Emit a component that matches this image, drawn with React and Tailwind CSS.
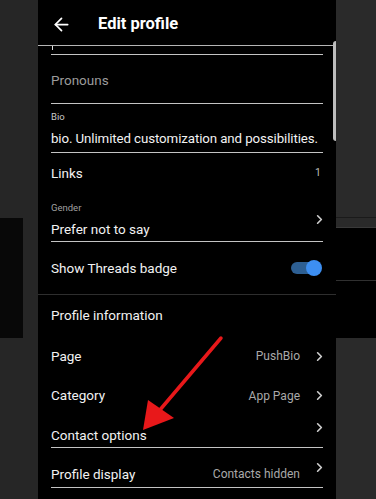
import { ArrowLeft, ChevronRight } from "lucide-react";

const font = { fontFamily: "Roboto, 'Noto Sans', sans-serif" };

function Chevron({ className = "" }) {
  return (
    <ChevronRight size={15} strokeWidth={2.6} className={"text-[#cfcfcf] " + className} />
  );
}

function NavRow({ label, value, h }) {
  return (
    <div className={"flex items-center justify-between px-[13px] " + h}>
      <span className="text-[13.5px] text-[#f2f2f2]">{label}</span>
      <div className="flex items-center gap-[12px]">
        {value && <span className="text-[12px] text-[#a9a9a9]">{value}</span>}
        <Chevron className="-mr-[4px]" />
      </div>
    </div>
  );
}

// rows whose chevron sits higher than the text, with an underline
function LinedRow({ label, value, h, pb, chevTop }) {
  return (
    <div className={"px-[13px] " + h}>
      <div className="h-full border-b border-[#c4c4c4] flex justify-between">
        <span className={"self-end text-[13.5px] leading-[16px] text-[#f2f2f2] " + pb}>{label}</span>
        <div className="flex items-start gap-[12px]">
          {value && (
            <span className={"self-end text-[12px] leading-[16px] text-[#a9a9a9] " + pb}>{value}</span>
          )}
          <Chevron className={"-mr-[4px] " + chevTop} />
        </div>
      </div>
    </div>
  );
}

export default function App() {
  return (
    <div className="w-[376px] h-[499px] flex bg-black overflow-hidden" style={font}>
      {/* left background */}
      <div className="w-[38px] shrink-0 flex flex-col bg-[#262626]">
        <div className="h-[218px]" />
        <div className="h-[120px] w-[23px] bg-[#080808]" />
      </div>

      {/* phone */}
      <div className="relative w-[298px] shrink-0 bg-black flex flex-col">
        {/* header */}
        <div className="h-[46px] shrink-0 flex items-center gap-[26px] px-[13px] pt-[3px] border-b border-[#b5b5b5]">
          <ArrowLeft size={21} strokeWidth={2} className="text-white" />
          <span className="text-[16.5px] font-bold text-white">Edit profile</span>
        </div>

        {/* partially hidden field */}
        <div className="h-[9px] shrink-0 px-[13px]">
          <div className="h-full border-b border-[#c4c4c4] relative">
            <div className="absolute left-[1px] top-0 w-[1px] h-[4px] bg-[#ddd]" />
          </div>
        </div>

        {/* pronouns */}
        <div className="h-[49px] shrink-0 px-[13px]">
          <div className="h-full border-b border-[#c4c4c4] flex items-center pt-[3px]">
            <span className="text-[13.5px] text-[#9b9b9b]">Pronouns</span>
          </div>
        </div>

        {/* bio */}
        <div className="h-[49px] shrink-0 px-[13px]">
          <div className="h-full border-b border-[#c4c4c4] flex flex-col pt-[8px]">
            <span className="text-[9.5px] leading-[10px] text-[#c8c8c8]">Bio</span>
            <span className="text-[13.3px] leading-[18px] mt-[8px] tracking-[-0.1px] text-[#f2f2f2] whitespace-nowrap">
              bio. Unlimited customization and possibilities.
            </span>
          </div>
        </div>

        {/* links */}
        <div className="h-[40px] shrink-0 px-[13px] flex items-center justify-between">
          <span className="text-[13.5px] text-[#f2f2f2]">Links</span>
          <span className="text-[10.5px] text-[#bbb] mr-[2px]">1</span>
        </div>

        {/* gender */}
        <div className="h-[49px] shrink-0 px-[13px]">
          <div className="h-full border-b border-[#c4c4c4] flex items-start justify-between pt-[10px]">
            <div className="flex flex-col">
              <span className="text-[9.5px] leading-[10px] text-[#a0a0a0]">Gender</span>
              <span className="text-[13.5px] leading-[18px] mt-[7px] text-[#f2f2f2]">Prefer not to say</span>
            </div>
            <Chevron className="mt-[9px] -mr-[4px]" />
          </div>
        </div>

        {/* threads badge */}
        <div className="h-[53px] shrink-0 px-[13px] flex items-center justify-between border-b border-[#2e2e2e]">
          <span className="text-[13.5px] text-[#f2f2f2]">Show Threads badge</span>
          <div className="relative w-[31px] h-[16px] mr-[1px]">
            <div className="absolute left-0 top-[2px] w-[28px] h-[12px] rounded-full bg-[#2d5f93]" />
            <div className="absolute right-0 top-0 w-[16px] h-[16px] rounded-full bg-[#3d8ff2]" />
          </div>
        </div>

        {/* profile information */}
        <div className="h-[41px] shrink-0 px-[13px] flex items-center">
          <span className="text-[13.5px] text-[#f2f2f2]">Profile information</span>
        </div>

        <NavRow label="Page" value="PushBio" h="h-[40px]" />
        <NavRow label="Category" value="App Page" h="h-[39px]" />
        <LinedRow label="Contact options" h="h-[33px]" pb="pb-[4px]" chevTop="mt-[5px]" />
        <LinedRow label="Profile display" value="Contacts hidden" h="h-[40px]" pb="pb-[5px]" chevTop="mt-[12px]" />

        {/* scrollbar */}
        <div className="absolute right-0 top-[41px] w-[3px] h-[100px] rounded-l-full bg-[#bdbdbd]" />

        {/* red arrow */}
        <svg className="absolute left-0 top-0 pointer-events-none" width="298" height="499">
          <line x1="183" y1="338" x2="121" y2="411" stroke="#e8181a" strokeWidth="3.5" strokeLinecap="round" />
          <polygon points="105,430 110,400 136,418" fill="#e8181a" />
        </svg>
      </div>

      {/* right background */}
      <div className="flex-1 flex flex-col bg-[#2a2a2a]">
        <div className="h-[218px] border-b border-[#1a1a1a]" />
        <div className="h-[10px] border-b border-[#3a3a3a]" />
        <div className="h-[110px] bg-black flex flex-col">
          <div className="h-[53px] border-b border-[#303030]" />
        </div>
        <div className="flex-1" />
      </div>
    </div>
  );
}
